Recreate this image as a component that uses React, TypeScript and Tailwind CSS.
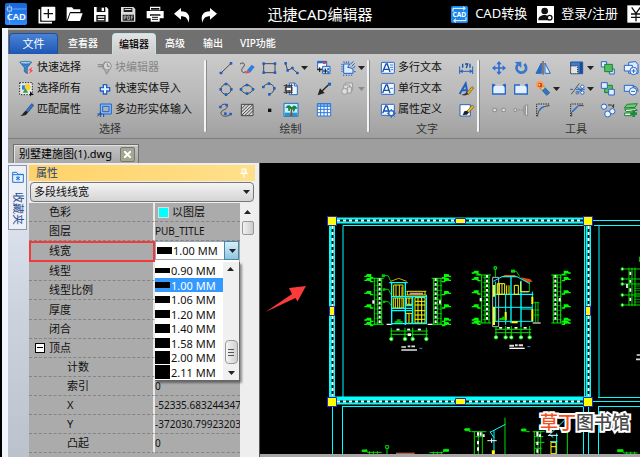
import React from "react";

type Kids = { children?: React.ReactNode };

const BLUE = "#1f5fc4";
const INK = "#4a4a4a";

/* 18px ribbon glyph, drawn on a 54-unit grid */
function Glyph({ children }: Kids) {
  return (
    <svg className="size-[18px] shrink-0" viewBox="0 0 54 54" fill="none" strokeWidth="3" aria-hidden="true">
      {children}
    </svg>
  );
}

function Dots({ at }: { at: number[][] }) {
  return (
    <>
      {at.map(([x, y]) => (
        <rect key={x + "-" + y} x={x - 4} y={y - 4} width="8" height="8" rx="2" fill={BLUE} />
      ))}
    </>
  );
}

function Sheet() {
  return <rect x="7" y="10" width="39" height="33" rx="2" fill="#f4f9ff" stroke="#2b67c8" />;
}

const icons: Record<string, React.ReactNode> = {
  filter: (
    <>
      <path d="M5 9h36L28 26v18l-9-6V26z" fill="#3b86c9" stroke="#1c5b9c" strokeWidth="2" />
      <ellipse cx="23" cy="11" rx="17" ry="4" fill="#9fd0f2" stroke="#1c5b9c" strokeWidth="2" />
      <path d="M46 20 29 35h8l-8 14 19-16h-8z" fill="#f0393c" stroke="#fff" strokeWidth="1" />
    </>
  ),
  selectAll: (
    <>
      <rect x="5" y="8" width="38" height="36" stroke="#222" strokeDasharray="4 4" fill="#e8e8e8" />
      <path d="M12 16h13v13H12z" fill="#2d7fd6" />
      <circle cx="29" cy="21" r="9" fill="#f7d32f" />
      <path d="M14 38 22 25l9 13z" fill="#31a24a" />
      <path d="M36 34v16l4-5h8z" fill="#111" />
    </>
  ),
  match: (
    <>
      <path d="M24 29 41 8l6 5-17 21z" fill="#3274c8" stroke="#173f7d" strokeWidth="2" />
      <path d="M24 29c-8 3-8 12-18 15 11 2 21-1 24-10z" fill="#222" />
    </>
  ),
  block: (
    <g stroke="#8f8f8f">
      <path d="M5 17h18M5 23h12l9-12v21l-7-8" strokeWidth="4" />
      <circle cx="34" cy="21" r="12" fill="#d5d5d5" />
      <path d="M34 14v9h7M27 36l5 10 8-13" fill="#aaa" />
    </g>
  ),
  plus: <path d="M22 14h10v9h9v10h-9v9H22v-9h-9V23h9z" fill="#e8f2ff" stroke="#2563c2" strokeWidth="4" />,
  polygon: (
    <>
      <path d="M13 9h33v30H13zM20 16h19v16H20z" fill="#8bbcf5" fillRule="evenodd" stroke="#1f63c6" />
      <path d="M4 39h14M13 48V32M4 46l8-8M23 39v9" stroke="#164b9f" />
    </>
  ),
  line: (
    <>
      <path d="M13 41 42 13" stroke={INK} />
      <Dots at={[[12, 42], [42, 13]]} />
    </>
  ),
  sketch: (
    <>
      <path d="M6 15c12-8 17 2 10 9s-6 14 0 17l8-3" stroke={INK} />
      <path d="m27 34 14-17 9 7-14 17z" fill="#2f7de0" />
      <path d="m27 34-5 10 14-3z" fill="#e34b43" />
    </>
  ),
  rect: (
    <>
      <path d="M11 14h34v27H11z" stroke={INK} />
      <Dots at={[[11, 14], [45, 14], [11, 41], [45, 41]]} />
    </>
  ),
  poly: (
    <>
      <path d="M11 14 17 34 30 28 46 42" stroke={INK} />
      <Dots at={[[11, 13], [17, 34], [31, 27], [46, 42]]} />
    </>
  ),
  insert: (
    <>
      <path d="M8 7h27v23H8z" fill="#fff" stroke="#2466c2" />
      <path d="M8 7h27v6H8z" fill="#2466c2" />
      <circle cx="28" cy="12" r="4" fill="#ee3535" />
      <path d="M23 22h22v22H23z" fill="#cfe4fb" stroke="#2466c2" />
      <path d="M6 32h15m-7-7v14m10-3h14m-7-7v14" stroke="#111" />
      <path d="M37 28h5v5h-5zM37 37h5v5h-5z" fill="#2466c2" />
    </>
  ),
  region: (
    <>
      <path d="M14 15h18l-6 10 10 2 6 4v12H14z" fill="#dcebff" stroke="#1f63c6" />
      <path
        d="M7 16h4M7 23h4M7 30h4M7 37h4M15 7v5M22 7v5M29 7v5M14 47v4M22 47v4M30 47v4M38 47v4M34 16l9-9M38 22l9-9M41 28l8-6M45 38h5"
        stroke="#1f63c6"
      />
    </>
  ),
  circle: (
    <>
      <circle cx="27" cy="28" r="15" stroke={INK} />
      <Dots at={[[27, 12], [11, 28], [43, 28], [27, 44]]} />
    </>
  ),
  ellipse: (
    <>
      <ellipse cx="27" cy="28" rx="17" ry="12" stroke={INK} />
      <Dots at={[[27, 15], [9, 28], [45, 28], [27, 41]]} />
    </>
  ),
  arc: (
    <>
      <path d="M10 20c10-13 29-11 32 4 1 9-5 16-14 18" stroke={INK} />
      <Dots at={[[10, 21], [27, 11], [43, 25], [28, 43]]} />
    </>
  ),
  copyDoc: (
    <>
      <path d="M22 9h16l8 8v27H22z" fill="#eef5ff" stroke="#2868c5" />
      <path d="M37 9v9h9" stroke="#2868c5" />
      <path d="M5 17h27M5 37h27M10 21h20v12H10zM13 12v30M28 12v30" stroke="#333" />
      <path d="M14 24h12v6H14z" fill="#fff" />
    </>
  ),
  leader: (
    <>
      <path d="M14 40 43 12" stroke="#222" strokeWidth="4" />
      <path d="m8 46 7-21 14 14z" fill="#222" />
      <path d="M39 8h9v9h-9z" fill={BLUE} />
    </>
  ),
  group: (
    <g stroke="#999" fill="#ddd">
      <path d="M19 9h22v22H19z" />
      <path d="M14 15h18v22H14z" />
      <circle cx="17" cy="34" r="9" />
      <path d="M25 21h12v18H25z" />
    </g>
  ),
  spline: (
    <>
      <path d="M10 17c8-12 24-8 20 2-4 9-20 8-18 18 2 11 18 11 29 3" stroke={INK} />
      <Dots at={[[10, 18], [29, 12], [25, 38], [41, 39]]} />
    </>
  ),
  hatch: (
    <>
      <path d="M10 10h35v34H10z" fill="#d7d7d7" stroke="#444" />
      <path d="m10 24 14-14M10 34l24-24M11 43 45 10M21 43l24-24M31 43l14-14" stroke="#444" />
    </>
  ),
  point: <path d="M24 23h10v10H24z" fill="#111" />,
  image: (
    <>
      <path d="M6 7h42v39H6z" fill="#c8efff" stroke="#1d72c9" />
      <path d="M8 35h38v10H8z" fill="#2a94cc" />
      <path d="m27 19-2 26h6l-1-26z" fill="#87502b" />
      <path d="M28 20c-5-9-13-6-16 0 7-2 8 0 9 10 1-5 3-7 7-8 5 2 6 5 7 9 4-7 3-10 9-9-2-8-10-9-14-2z" fill="#12853f" stroke="#12853f" />
    </>
  ),
  table: (
    <>
      <path d="M7 8h40v37H7z" fill="#fff" stroke="#2a78dc" />
      <path d="M8 8h38v8H8zM7 25h40M7 35h40M17 8v37M27 8v37M37 8v37" stroke="#2a78dc" fill="#8abaf5" />
    </>
  ),
  mtext: (
    <>
      <Sheet />
      <path d="m11 39 10-24h4l8 24M15 31h14" stroke="#174fa9" strokeWidth="4" />
      <path d="M33 18h9M33 25h9M35 32h7" stroke="#3f83dd" />
    </>
  ),
  text: (
    <>
      <Sheet />
      <path d="m11 39 10-24h4l8 24M15 31h14" stroke="#174fa9" strokeWidth="4" />
      <path d="M33 25h9" stroke="#3f83dd" />
    </>
  ),
  attdef: (
    <>
      <Sheet />
      <path d="m11 37 9-22h4l8 22M15 30h14" stroke="#174fa9" strokeWidth="4" />
      <circle cx="37" cy="37" r="8" fill="#fff" stroke="#2767c7" strokeWidth="4" />
      <path d="M37 24v7M37 43v8M24 37h7M43 37h8M28 28l5 5M41 41l6 6M46 28l-5 5M28 46l5-5" stroke="#2767c7" />
    </>
  ),
  dim: (
    <>
      <path d="M8 22v23M47 22v23M8 37h39" stroke="#2464c4" />
      <path d="m8 37 9-6v12zM47 37l-9-6v12z" fill="#2464c4" />
      <path d="M17 14v12M24 15h8l-4 12M39 14v12" stroke="#174fa9" strokeWidth="4" />
    </>
  ),
  textStyle: (
    <>
      <path d="m8 42 18-31 6 31M16 31h15" stroke="#2360be" strokeWidth="6" />
      <path d="M29 39 45 20l5 4-16 20z" fill="#e5ad25" stroke="#6b4b10" strokeWidth="2" />
      <path d="M14 45c8 3 15 1 20-3l-6-6c-5 8-9 5-14 9z" fill="#333" />
    </>
  ),
  edit: (
    <>
      <path d="M9 11h31v34H9z" fill="#fff" stroke="#2464c4" />
      <path d="M30 31 46 12l5 5-16 19z" fill="#e8bd2d" stroke="#6b4b10" strokeWidth="2" />
      <path d="m17 42 5-11 8-2 5 6-5 6z" fill="#222" />
    </>
  ),
  move: (
    <>
      <path d="M27 11v32M11 27h32" stroke="#2b6fd4" strokeWidth="5" />
      <path d="m27 6 8 10H19zM27 48l8-10H19zM6 27l10-8v16zM48 27l-10-8v16z" fill="#2b6fd4" />
    </>
  ),
  rotate: (
    <>
      <path d="M37 15c14 16-2 31-16 24-9-5-10-16-3-23" stroke="#3778cd" strokeWidth="8" />
      <path d="m8 9 20-1v19z" fill="#3778cd" />
    </>
  ),
  mirror: (
    <>
      <path d="M22 12v31H6zM33 12v31h16z" fill="#d8e8fb" stroke="#2b69c4" />
      <path d="M22 12v31H6z" fill="#2b69c4" />
      <path d="M27 6v41" stroke="#333" />
    </>
  ),
  scale: (
    <>
      <path d="M8 9h36v35H8z" fill="#3d7ecc" stroke="#204e94" />
      <path d="M8 21h21v23H8z" fill="#e5e5e5" stroke="#333" strokeDasharray="3 3" />
      <path d="M35 11h7v31h-7z" fill="#1e4a94" />
    </>
  ),
  front: (
    <>
      <path d="M7 8h16v16H7zM31 30h15v15H31z" fill="#e4efff" stroke="#2868c5" />
      <path d="M17 16h23v22H17z" fill="#53bd64" stroke="#188330" />
    </>
  ),
  shapes: (
    <>
      <path d="m20 10 21-2 7 9v26H20z" fill="#dceaff" stroke="#2868c5" />
      <path d="M7 19h24v17H7z" fill="#eef5ff" stroke="#2868c5" />
      <circle cx="35" cy="36" r="11" fill="#eff6ff" stroke="#2868c5" />
      <path d="M29 36h12M35 30v12" stroke="#2868c5" />
    </>
  ),
  stretch: (
    <>
      <path d="M8 15h38v27H8z" fill="#e4efff" stroke="#2868c5" strokeWidth="4" />
      <path d="M16 11h22v7H16z" fill="#c6c6c6" />
      <path d="m8 9 6 8-6 7zM46 9l-6 8 6 7z" fill="#2868c5" />
    </>
  ),
  lengthen: (
    <>
      <path d="M8 15h38v27H8z" fill="#e4efff" stroke="#2868c5" strokeWidth="4" />
      <path d="M24 11h14v7H24z" fill="#c6c6c6" />
      <path d="M46 9l-6 8 6 7z" fill="#2868c5" />
    </>
  ),
  explode: (
    <>
      <circle cx="18" cy="15" r="12" fill="#f5a35a" />
      <circle cx="18" cy="15" r="7" fill="#e33a25" />
      <circle cx="16" cy="14" r="3" fill="#ffe766" />
      <path d="m20 26 9-7 18 19-9 8z" fill="#2d79c5" stroke="#174b87" strokeWidth="2" />
      <path d="m20 26 9-7 4 4-9 8z" fill="#f2d05a" />
    </>
  ),
  trim: (
    <>
      <path d="M10 43 34 10" stroke="#555" />
      <path d="M6 28h9M24 28h26M28 22l20 16M29 39l18-18" stroke="#2868c5" />
      <circle cx="43" cy="20" r="5" fill="#fff" stroke="#2868c5" />
      <circle cx="43" cy="38" r="5" fill="#fff" stroke="#2868c5" />
      <circle cx="28" cy="38" r="4" stroke="#2868c5" />
    </>
  ),
  back: (
    <>
      <path d="M17 16h23v22H17z" fill="#53bd64" stroke="#188330" />
      <path d="M7 8h18v17H7zM29 28h17v17H29z" fill="#e4efff" stroke="#2868c5" />
    </>
  ),
  shapes2: (
    <>
      <path d="M7 16h27v18H7z" fill="#dceaff" stroke="#2868c5" />
      <path d="M32 18q16 0 16 17" stroke="#2868c5" />
      <circle cx="33" cy="34" r="11" fill="#eff6ff" stroke="#2868c5" />
      <path d="M27 34h12" stroke="#2868c5" />
    </>
  ),
  breakAt: (
    <>
      <path d="M9 22h10v10H9zM36 22h10v10H36z" fill="#e4e4e4" stroke="#8d8d8d" />
      <path d="M22 27h12" stroke="#999" strokeDasharray="2 3" />
    </>
  ),
  join: (
    <>
      <path d="M6 23h8v8H6zM40 12h7v32h-7z" fill="#e4e4e4" stroke="#8d8d8d" />
      <path d="M18 27h6m3 0h9M36 15v26" stroke="#8d8d8d" />
    </>
  ),
  fillet: (
    <>
      <path d="M8 46V9h39" stroke="#222" strokeDasharray="4 3" />
      <path d="M11 46C11 27 24 15 47 14" stroke="#444" />
      <path d="M16 28q5-8 13-11" stroke="#2a74d4" strokeWidth="5" />
    </>
  ),
  chamfer: (
    <>
      <path d="M8 46V9h39" stroke="#222" strokeDasharray="4 3" />
      <path d="M11 46V34L31 14h16" stroke="#444" />
      <path d="m13 32 17-17" stroke="#2a74d4" strokeWidth="5" />
    </>
  ),
  links: (
    <>
      <circle cx="15" cy="17" r="8" fill="#e9f3ff" stroke="#2868c5" />
      <circle cx="26" cy="39" r="9" fill="#e9f3ff" stroke="#2868c5" />
      <circle cx="40" cy="31" r="8" fill="#e9f3ff" stroke="#2868c5" />
      <path d="M27 12h11l6 9M44 9v9" stroke="#333" />
    </>
  ),
  layers: (
    <>
      <path d="m15 10 31-2-7 11-32 2z" fill="#72ca77" stroke="#16832f" />
      <path d="m8 25 31-2 7 5-33 4zM8 36h20v8H8z" fill="#e9f8ea" stroke="#16832f" />
      <path d="M35 28v20M25 38h20" stroke="#1a8c35" strokeWidth="8" />
    </>
  ),
};

function Caret({ light }: { light?: boolean }) {
  return (
    <svg className="h-1.5 w-2 shrink-0" viewBox="0 0 8 6" aria-hidden="true">
      <path d="M1 1h7L4.500 5z" fill={light ? "#8a8a8a" : "#222"} />
    </svg>
  );
}

function Tool({ icon, label, menu, off }: { icon: string; label: string; menu?: boolean; off?: boolean }) {
  return (
    <button type="button" aria-label={label} disabled={off} className="flex h-[21px] items-center justify-start">
      <Glyph>{icons[icon]}</Glyph>
      {menu && <Caret light={off} />}
    </button>
  );
}

function LabelTool({ icon, label, off }: { icon: string; label: string; off?: boolean }) {
  return (
    <button
      type="button"
      disabled={off}
      className="flex h-[21px] items-center gap-px whitespace-nowrap text-[#111] disabled:text-[#858585]"
    >
      <Glyph>{icons[icon]}</Glyph>
      {label}
    </button>
  );
}

function Group({ title, className, children }: Kids & { title: string; className: string }) {
  return (
    <section className={"flex shrink-0 flex-col pt-[3px] " + className}>
      {children}
      <h2 className="h-[18px] pl-2 text-center leading-[18px] text-[#333]">{title}</h2>
    </section>
  );
}

function Divider() {
  return <div className="my-1.5 w-0.5 shrink-0 rounded bg-[#f1f3f5] shadow-[1px_0_0_#8b8b8b]" />;
}

function Ribbon() {
  return (
    <div className="flex h-[85px] shrink-0 overflow-hidden border-b border-[#7d7d7d] bg-linear-to-b from-[#cbcbcb] via-[#b9b9b9] to-[#a0a0a0] text-[11px]">
      <Group title="选择" className="w-[196px]">
        <div className="grid grid-cols-[78px_1fr] pl-[10px]">
          <LabelTool icon="filter" label="快速选择" />
          <LabelTool icon="block" label="块编辑器" off />
          <LabelTool icon="selectAll" label="选择所有" />
          <LabelTool icon="plus" label="快速实体导入" />
          <LabelTool icon="match" label="匹配属性" />
          <LabelTool icon="polygon" label="多边形实体输入" />
        </div>
      </Group>
      <Divider />
      <Group title="绘制" className="w-[161px]">
        <div className="grid grid-cols-[21px_22px_22px_33px_24px_28px] pl-[11px]">
          <Tool icon="line" label="直线" />
          <Tool icon="sketch" label="徒手画" />
          <Tool icon="rect" label="矩形" />
          <Tool icon="poly" label="多段线" menu />
          <Tool icon="insert" label="插入块" />
          <Tool icon="region" label="面域" menu />
          <Tool icon="circle" label="圆" />
          <Tool icon="ellipse" label="椭圆" />
          <Tool icon="arc" label="圆弧" />
          <Tool icon="copyDoc" label="外部参照" />
          <Tool icon="leader" label="引线" />
          <Tool icon="group" label="编组" menu off />
          <Tool icon="spline" label="样条曲线" />
          <Tool icon="hatch" label="填充" />
          <Tool icon="point" label="点" />
          <Tool icon="image" label="图像" />
          <Tool icon="table" label="表格" />
        </div>
      </Group>
      <Divider />
      <Group title="文字" className="w-[108px]">
        <div className="grid grid-cols-[78px_1fr] pl-[10px]">
          <LabelTool icon="mtext" label="多行文本" />
          <Tool icon="dim" label="标注" />
          <LabelTool icon="text" label="单行文本" />
          <Tool icon="textStyle" label="文字样式" />
          <LabelTool icon="attdef" label="属性定义" />
          <Tool icon="edit" label="编辑文字" />
        </div>
      </Group>
      <Divider />
      <Group title="工具" className="w-[186px]">
        <div className="grid grid-cols-[22px_22px_34px_31px_23px_24px] pl-[11px]">
          <Tool icon="move" label="移动" />
          <Tool icon="rotate" label="旋转" />
          <Tool icon="mirror" label="镜像" />
          <Tool icon="scale" label="缩放" menu />
          <Tool icon="front" label="前置" />
          <Tool icon="shapes" label="并集" />
          <Tool icon="stretch" label="拉伸" />
          <Tool icon="lengthen" label="拉长" />
          <Tool icon="explode" label="分解" menu />
          <Tool icon="trim" label="修剪" menu />
          <Tool icon="back" label="后置" />
          <Tool icon="shapes2" label="差集" />
          <Tool icon="breakAt" label="打断" off />
          <Tool icon="join" label="合并" off />
          <Tool icon="fillet" label="圆角" />
          <Tool icon="chamfer" label="倒角" />
          <Tool icon="links" label="复制" />
          <Tool icon="layers" label="图层" />
        </div>
      </Group>
    </div>
  );
}

/* 20px title bar glyph, drawn on a 60-unit grid */
function BarIcon({ label, children }: Kids & { label: string }) {
  return (
    <button type="button" aria-label={label} className="shrink-0">
      <svg className="size-5" viewBox="0 0 60 60" fill="none" aria-hidden="true">
        {children}
      </svg>
    </button>
  );
}

function TitleBar() {
  return (
    <header className="grid h-7 shrink-0 grid-cols-[1fr_auto_1fr] items-center overflow-hidden bg-black text-[13px] text-white">
      <div className="flex items-center gap-[7px] pl-[5px]">
        <svg className="mr-[3px] h-[22px] w-[22px] shrink-0" viewBox="0 0 66 66" role="img" aria-label="CAD">
          <defs>
            <linearGradient id="logo" x1="0" y1="0" x2="0" y2="1">
              <stop offset="0" stopColor="#1666d8" />
              <stop offset="1" stopColor="#2f8bff" />
            </linearGradient>
          </defs>
          <rect width="66" height="66" rx="5" fill="url(#logo)" />
          <path d="M2 18h62M14 4v58" stroke="#8fc3ff" strokeWidth="2" />
          <rect x="8" y="12" width="12" height="12" fill="#2b7fe8" stroke="#d5e9ff" strokeWidth="2" />
          <text x="34" y="51" textAnchor="middle" fontSize="28" fontWeight="600" fill="#fff" fontFamily="Noto Sans, sans-serif">
            CAD
          </text>
        </svg>
        <BarIcon label="新建">
          <path d="M7 16v40h38" stroke="#fff" strokeWidth="5" />
          <rect x="13" y="8" width="42" height="42" rx="3" fill="#fff" />
          <path d="M34 15v28M20 29h28" stroke="#111" strokeWidth="4" />
        </BarIcon>
        <BarIcon label="打开">
          <path d="M8 50V10h16l5 6h20v8H18z" fill="#fff" />
          <path d="M19 28h37l-8 23H11z" fill="#fff" />
        </BarIcon>
        <BarIcon label="保存">
          <path d="M9 9h37l6 6v38H9z" fill="#fff" />
          <path d="M17 9h26v15H17zM16 33h28v20H16z" fill="#111" />
          <path d="M32 11h7v10h-7zM20 37h20v4H20zM20 45h20v4H20z" fill="#fff" />
        </BarIcon>
        <BarIcon label="保存为PDF">
          <path d="M9 9h37l6 6v38H9z" fill="#ddd" />
          <path d="M17 12h26v12H17zM14 32h34v18H14z" fill="#222" />
          <path d="M20 15h20v3H20z" fill="#ddd" />
          <path d="M18 47V36h6v6h-6M29 36v11h5V36zM40 47V36h6m-6 5h5" stroke="#ddd" strokeWidth="2" />
        </BarIcon>
        <BarIcon label="打印">
          <path d="M15 8h31v11H15zM5 21h51v22H5z" fill="#fff" />
          <path d="M18 12h25v5H18zM15 31h31v5H15z" fill="#111" />
          <path d="M17 35h27v18H17z" fill="#fff" />
          <path d="M21 40h18M21 46h18" stroke="#111" strokeWidth="3" />
        </BarIcon>
        <BarIcon label="撤销">
          <path d="M6 29 27 12v10c21 0 30 14 22 34-2-13-8-19-22-19v10z" fill="#fff" />
        </BarIcon>
        <BarIcon label="重做">
          <path d="M54 29 33 12v10C12 22 3 36 11 56c2-13 8-19 22-19v10z" fill="#fff" />
        </BarIcon>
      </div>
      <h1 className="text-[15px]">迅捷CAD编辑器</h1>
      <div className="-mr-1.5 flex items-center justify-end gap-2 whitespace-nowrap">
        <button type="button" className="flex items-center gap-[7px]">
          <svg className="size-[17px]" viewBox="0 0 51 51" aria-hidden="true">
            <rect width="51" height="51" rx="5" fill="#1b87e8" />
            <path d="M6 17V7h35M36 2l7 5-7 6M45 34v10H10M15 38l-7 6 7 5" fill="none" stroke="#fff" strokeWidth="3" />
            <text x="25" y="34" textAnchor="middle" fontSize="20" fontWeight="700" fill="#fff" fontFamily="Noto Sans, sans-serif">
              CAD
            </text>
          </svg>
          CAD转换
        </button>
        <button type="button" className="ml-0.5 flex items-center gap-[7px]">
          <svg className="size-[17px]" viewBox="0 0 51 51" aria-hidden="true">
            <rect width="51" height="51" fill="#fff" />
            <circle cx="23" cy="15" r="10" fill="#111" />
            <path d="M4 43c0-12 6-12 14-16h10l8 16z" fill="#111" />
            <circle cx="38" cy="35" r="7" fill="#fff" stroke="#111" strokeWidth="4" />
          </svg>
          登录/注册
        </button>
        <BarIcon label="充值">
          <rect x="4" y="4" width="52" height="52" fill="#fff" />
          <path d="m17 10 13 18 13-18M30 28v24M15 30h30M15 40h30" stroke="#111" strokeWidth="4" />
        </BarIcon>
      </div>
    </header>
  );
}

function Tabs() {
  return (
    <nav className="flex h-[26px] shrink-0 items-end border-t-2 border-[#bdbdbd] bg-[#707070] pl-px text-[10px] font-medium text-white">
      <button
        type="button"
        className="mr-2.5 h-[21px] w-[49px] rounded-t-sm border border-b-0 border-[#1d4fa5] bg-linear-to-b from-[#4a83d4] to-[#1c57b5] text-[11px] font-normal"
      >
        文件
      </button>
      <button type="button" className="mr-3.5 h-[21px]">查看器</button>
      <button
        type="button"
        className="mr-[9px] h-[21px] w-11 rounded-t-sm border border-b-0 border-[#bfe3e8] bg-linear-to-b from-[#e3e3e3] to-[#cbcbcb] text-black"
      >
        编辑器
      </button>
      <button type="button" className="mr-[18px] h-[21px]">高级</button>
      <button type="button" className="mr-[17px] h-[21px]">输出</button>
      <button type="button" className="h-[21px]">VIP功能</button>
    </nav>
  );
}

const widths = [
  ["0.90 MM", "h-[5px]"],
  ["1.00 MM", "h-1.5"],
  ["1.06 MM", "h-[7px]"],
  ["1.20 MM", "h-2"],
  ["1.40 MM", "h-[9px]"],
  ["1.58 MM", "h-2.5"],
  ["2.00 MM", "h-[13px]"],
  ["2.11 MM", "h-3.5"],
];

function WidthPicker() {
  return (
    <div className="relative z-10 h-full w-[84px] bg-white">
      <span className="absolute top-1.5 left-0.5 h-[7px] w-[15px] bg-black" />
      <select
        aria-label="线宽"
        defaultValue="1.00 MM"
        className="h-[19px] w-full appearance-none border border-[#9aa7b5] bg-transparent pl-[17px] text-[11px] leading-4"
      >
        {widths.map(([w]) => (
          <option key={w}>{w}</option>
        ))}
      </select>
      <span className="pointer-events-none absolute top-0 right-0 flex h-[19px] w-[15px] items-center justify-center border border-[#4887a8] bg-linear-to-b from-[#d8effa] to-[#8fc5e0]">
        <Caret />
      </span>
      <div className="absolute top-full left-0 flex w-[85px] border-r border-b border-[#666] bg-white shadow-[2px_2px_2px_#0006]">
        <ul role="listbox" aria-label="线宽列表" className="flex-1 py-px text-[11px]">
          {widths.map(([w, bar], i) => (
            <li
              key={w}
              role="option"
              aria-selected={i === 1}
              className="flex h-[15px] items-center gap-px leading-[15px] even:h-3.5 aria-selected:bg-[#3399ff] aria-selected:text-white"
            >
              <span className={"w-[15px] shrink-0 bg-black " + bar} />
              <span className="whitespace-nowrap">{w}</span>
            </li>
          ))}
        </ul>
        <div className="flex w-4 flex-col items-center justify-between bg-[#f0f0f0] py-1">
          <span className="rotate-180"><Caret /></span>
          <span className="mt-[62px] flex h-6 w-[13px] flex-col items-center justify-center gap-0.5 rounded-sm border border-[#999] bg-linear-to-r from-[#f5f5f5] to-[#cfcfcf]">
            <i className="h-px w-1.5 bg-[#555]" />
            <i className="h-px w-1.5 bg-[#555]" />
            <i className="h-px w-1.5 bg-[#555]" />
          </span>
          <Caret />
        </div>
      </div>
    </div>
  );
}

const rows: { name: string; value?: React.ReactNode; level?: number }[] = [
  {
    name: "色彩",
    value: (
      <span className="flex items-center gap-1 pl-1 text-[11px]">
        <i className="size-[9px] bg-[#00ffff] ring-1 ring-[#ddd]" />
        以图层
      </span>
    ),
  },
  { name: "图层", value: "PUB_TITLE" },
  { name: "线宽", value: <WidthPicker /> },
  { name: "线型" },
  { name: "线型比例" },
  { name: "厚度" },
  { name: "闭合" },
  { name: "顶点", level: 0 },
  { name: "计数", level: 2 },
  { name: "索引", value: "0", level: 2 },
  { name: "X", value: "-52335.683244347", level: 2 },
  { name: "Y", value: "-372030.79923203", level: 2 },
  { name: "凸起", value: "0", level: 2 },
];

function Properties() {
  return (
    <aside className="flex w-[231px] shrink-0 flex-col border-r border-[#555] bg-[#eeeeee] pt-0.5 pr-1 text-[11px] text-[#111]">
      <header className="flex h-4 shrink-0 items-center justify-between bg-linear-to-r from-[#ffd268] to-[#ffe08a] pr-1.5 pl-[7px] text-[#1c3f7a]">
        <h2>属性</h2>
        <button type="button" aria-label="固定">
          <svg className="size-2.5" viewBox="0 0 10 10" stroke="#fff" fill="none" aria-hidden="true">
            <path d="M3 1h4v4H3zM6 1v4M1 5.500h8M5 6v4" />
          </svg>
        </button>
      </header>
      <div className="relative mx-px my-px h-5 shrink-0">
        <select
          aria-label="对象"
          className="h-full w-full appearance-none rounded-sm border border-[#777] bg-linear-to-b from-[#f4f4f4] to-[#d4d4d4] pl-[3px]"
        >
          <option>多段线线宽</option>
        </select>
        <span className="pointer-events-none absolute top-0 right-1 flex h-full items-center">
          <Caret />
        </span>
      </div>
      <div className="flex min-h-0 flex-1">
        <div className="w-[211px] bg-[#ababab]">
          <table className="h-[250px] w-full table-fixed border-separate border-spacing-0">
            <colgroup>
              <col className="w-[126px]" />
              <col />
            </colgroup>
            <tbody>
              {rows.map(({ name, value, level = 1 }, i) => (
                <tr key={name}>
                  <th
                    scope="row"
                    className={
                      "border-r-2 border-b border-r-[#e8e8e8] p-0 text-left font-normal " +
                      (i === 2 ? "border-b-transparent outline-2 -outline-offset-2 outline-[#f23a3a] " : "border-b-[#858585] [border-bottom-style:dashed] ") +
                      (level === 2 ? "pl-[38px]" : level === 1 ? "pl-5" : "pl-1.5")
                    }
                  >
                    <span className="flex items-center gap-1 leading-4">
                      {level === 0 && (
                        <button
                          type="button"
                          aria-label="折叠"
                          className="flex size-2.5 items-center justify-center border border-black bg-white"
                        >
                          <i className="h-px w-1.5 bg-black" />
                        </button>
                      )}
                      {name}
                    </span>
                  </th>
                  <td
                    className={
                      "p-0 text-[10px] leading-4 whitespace-nowrap " +
                      (i === 2 ? "" : "overflow-hidden border-b border-dashed border-[#858585]")
                    }
                  >
                    {value}
                  </td>
                </tr>
              ))}
            </tbody>
          </table>
        </div>
        <div className="flex flex-1 flex-col items-center gap-1.5 pt-1.5">
          <span className="rotate-180"><Caret /></span>
          <span className="h-3.5 w-3 rounded-xs border border-[#999] bg-linear-to-r from-[#f2f2f2] to-[#cccccc]" />
        </div>
      </div>
    </aside>
  );
}

/* Level marks with their dimension lines; dir is the side the marks point to */
function Levels({ x, dir, ys }: { x: number; dir: 1 | -1; ys: number[] }) {
  const top = ys[0];
  const bottom = ys[ys.length - 1];
  const ticks: number[] = [];
  for (let y = top + 14; y < bottom; y += 14) ticks.push(y);
  return (
    <g>
      <g stroke="#00f000" strokeWidth="3">
        <path d={`M${x} ${top + 6}V${bottom}M${x - dir * 10} ${top + 6}V${bottom}M${x - dir * 22} ${top + 6}V${bottom}`} />
        <path d={`M${x + dir * 18} ${top + 6}H${x - dir * 28}M${x + dir * 18} ${bottom}H${x - dir * 28}`} />
        {ticks.map((y) => (
          <path key={y} d={`M${x + 3} ${y}H${x - dir * 24}`} strokeWidth="2" />
        ))}
      </g>
      {ys.map((y) => (
        <path key={y} d={`M${x + dir * 30} ${y}h${-dir * 6}l${-dir * 3}-5h${-dir * 10}v9h${-dir * 8}`} fill="#00ff00" stroke="#00ff00" strokeWidth="4" />
      ))}
      {ticks.map((y) => (
        <rect key={y} x={x - dir * 16 - 3} y={y - 8} width="6" height="8" fill="#fff" />
      ))}
      <rect x={x - 6} y={(top + bottom) / 2} width="6" height="10" fill="#fff" />
    </g>
  );
}

/* Axis bubbles and dimension chain under an elevation */
function Axes({ xs, y }: { xs: number[]; y: number }) {
  const a = xs[0];
  const b = xs[xs.length - 1];
  return (
    <g>
      <path d={`M${a - 3} ${y}H${b + 5}M${a - 3} ${y + 10}H${b + 5}`} stroke="#00e000" strokeWidth="3" />
      {xs.map((x, i) => (
        <g key={x}>
          <path d={`M${x} ${y - 10}v28`} stroke="#00e000" strokeWidth="3" />
          <circle cx={x} cy={y + 24} r="5" fill="#d8ffd8" stroke="#00ff00" strokeWidth="3" />
          {i > 0 && <rect x={(x + xs[i - 1]) / 2 - 5} y={y - 7} width="9" height="5" fill="#fff" />}
        </g>
      ))}
    </g>
  );
}

function FrontElevation() {
  return (
    <g transform="translate(360 265) scale(.33333)" fill="none" strokeWidth="3">
      <Levels x={43} dir={-1} ys={[34, 46, 85, 125, 165, 178]} />
      <Levels x={243} dir={1} ys={[34, 46, 85, 125, 165, 178]} />
      <path d="M70 32h14l9 18M73 73h12l8 15M73 110h12l8 10" stroke="#00c800" />
      <path d="M65 28h10v9H65zM68 70h8v7h-8zM68 107h8v7h-8z" fill="#00c800" />
      <path d="M101 60h28v34h-28zM108 60v34M118 60v34M126 65v29M100 99h31v30h-31zM106 99v30M113 99v30M119 99v30M126 99v30M139 79h60M139 90h60M142 79v11M195 79v11" stroke="#e8e800" />
      <path d="M139 99h17v19h-17zM147 99v19M138 145h18v30h-18zM147 145v30M165 98h30v76h-30zM174 98v76M185 98v76M165 109h30M165 120h30M165 137h30M165 150h30M165 163h30" stroke="#ffff00" />
      <path d="M149 86h40" stroke="#d99" strokeWidth="6" />
      <path d="m92 49 24-9 24 9" stroke="#c8b000" />
      <path d="M88 53h55M95 55v125M136 52v128M158 96v80M199 90v88M94 95h107M94 130h64M94 137h64M136 122h22M94 176h106" stroke="#00ffff" strokeWidth="4" />
      <path d="M104 174v-6h6v-5h12v5h6v6z" fill="#00b800" />
      <path d="M80 178h13M203 178h14" stroke="#fff" strokeWidth="4" />
      <Axes xs={[94, 135, 158, 199]} y={198} />
      <path d="M143 205h10v8h-10z" fill="#fff" />
      <path d="M124 246h14m5-2h8m3 0h11" stroke="#ddd" strokeWidth="5" />
      <path d="M124 255h47" stroke="#fff" strokeWidth="4" />
      <path d="M178 250h9" stroke="#39c" />
    </g>
  );
}

function SideElevation() {
  return (
    <g transform="translate(470 260) scale(.33333)" fill="none" strokeWidth="3">
      <Levels x={35} dir={-1} ys={[39, 58, 98, 140, 180, 189]} />
      <Levels x={272} dir={1} ys={[39, 58, 98, 140, 180, 189]} />
      <path d="M76 26v26M127 34h12l10 16M178 66v30M197 125v62M204 125v62M192 128h16M192 150h16M192 165h16" stroke="#00c800" />
      <circle cx="76" cy="24" r="4" stroke="#00e000" strokeWidth="4" />
      <path d="M123 29h12v9h-12z" fill="#00e000" />
      <path d="M68 52h18v148H68z" stroke="#bbb" />
      <path d="m92 52 12-7h30l8 7z" fill="#e06a00" />
      <path d="m150 52 30 5 8 8-20 2z" fill="#e04a10" />
      <path d="m70 64 26-14h45l9 5 30 16M107 104v90M77 65v120M75 142h112M153 147h36M75 184h115M187 95v90" stroke="#00ffff" />
      <path d="M123 50v140M153 62v138M75 103h115" stroke="#00ffff" strokeWidth="4" />
      <path d="M82 71h22v32H82zM88 71v32M96 71v32M110 76v27M117 76v27M133 76h12v27h-12zM152 65v30h26" stroke="#ffff00" />
      <path d="M72 75v35M72 140v55M107 156v25M187 110v22M187 148v35M125 187h18" stroke="#ffff00" strokeWidth="6" />
      <path d="M157 96h20" stroke="#ccc" strokeDasharray="3 2" />
      <path d="M88 180v-6h8v-4h10v10z" fill="#00c800" />
      <path d="M188 189h24" stroke="#ccc" strokeWidth="4" />
      <Axes xs={[78, 107, 124, 153, 179]} y={208} />
      <path d="M118 257h14m3-1h8m3 0h13" stroke="#ddd" strokeWidth="6" />
      <path d="M118 265h46" stroke="#fff" strokeWidth="4" />
      <path d="M172 260h9" stroke="#39c" />
    </g>
  );
}

function PartialDrawings() {
  return (
    <>
      <g transform="translate(450 200) scale(.33333)" fill="none" stroke="#00e000" strokeWidth="3">
        <path d="M517 207h55M517 237h55M517 252h55M517 285h55M517 315h55M537 203v115M546 203v115M555 203v115M569 170v16" />
        <path d="M553 258h17M553 265h17M553 272h17M553 280h17M553 290h17M553 298h17M553 306h17" strokeWidth="2" />
        {[207, 237, 252, 285, 315].map((y) => (
          <circle key={y} cx="517" cy={y} r="4" fill="#dfd" />
        ))}
        <path d="M541 215v10M541 240v8M541 265v10M541 293v10M531 252v12" stroke="#fff" strokeWidth="5" />
        <path d="M560 465h10M558 478h12" stroke="#ddd" strokeWidth="5" />
      </g>
      <g transform="translate(320 355) scale(.33333)" fill="none" stroke="#00e000" strokeWidth="3">
        <path d="M125 288h10l4-5 3 9h43M328 293h40l4-6h14M197 272h9v8h-9zM201 280v18M148 289v8M160 289v8M172 289v8M340 290v8M352 290v8M364 290v8" />
        <path d="M432 224h12l3 5h8M602 225h12l5 5h10M463 228v70M475 232v66M487 232v66M643 228v70M654 232v66M662 228v70M456 230h43M638 230h36M466 245h20M645 245h25M645 262h28M645 280h20" />
        <path d="M127 285h13v5h-13zM371 283h15v6h-15zM435 221h14v6h-14zM605 222h13v6h-13zM893 284h16v6h-16z" fill="#00ff00" />
        <path d="M555 188v110M742 200v98M893 288h14l4 6h42M920 290v8M932 290v8M944 290v8" />
        <path d="m510 232 46-24M522 225v65M510 230l12 18M688 240l46-45M710 235v62M688 238l12 10M690 260h22" stroke="#00ffff" />
        <path d="M228 296h56" stroke="#a64" strokeWidth="6" />
        <path d="M520 286v12" stroke="#ffff00" strokeWidth="9" />
        <path d="M693 262h15v34h-15zM693 275h15" stroke="#ffff00" />
        <path d="M474 232v10M482 232v10M491 238v8M474 258v10M474 277v10M652 230v14M652 260v10M652 283v10M660 238v8" stroke="#fff" strokeWidth="6" />
        <path d="M502 257h28M515 250v14M684 241h30" stroke="#fff" />
      </g>
    </>
  );
}

function Canvas() {
  return (
    <main className="relative min-w-0 flex-1 overflow-hidden border-b-3 border-[#aaa5a5] bg-black">
      <svg
        className="h-full w-full"
        viewBox="260 163 380 291"
        preserveAspectRatio="xMinYMin slice"
        role="img"
        aria-label="别墅建施图"
      >
        <g fill="none" stroke="#00ffff">
          <path d="M588 220.500h52M594 225.500h46M599 225v173M598 397.500h42M590 401.500h50M598 406.500h42M598.500 406v50M588.500 402v54M583.500 406v50M332.500 402v54M342.500 406v50M342 406.500h242" />
          <path d="M343 397V225.500h241" />
          <path d="M332 220.500h256M332 221v180" strokeWidth="6" />
          <path d="M332 400.500h256" strokeWidth="8" />
          <path d="M587.500 221v180" strokeWidth="7" />
        </g>
        <path d="M585.500 226v170" stroke="#004d4d" />
        <g fill="none" strokeWidth="2">
          <path d="M337 220.500h246M332.500 226v170M588.500 226v170M337 401.500h246" stroke="#111" />
          <path d="M337 220.500h246M332.500 226v170M588.500 226v170M337 401.500h246" stroke="#fff" strokeDasharray="3 3" />
        </g>
        <g fill="#ffff00" stroke="#2525c8">
          <path d="M327.500 216.500h9v9h-9zM583.500 216.500h9v9h-9zM327.500 397.500h9v9h-9zM583.500 397.500h9v9h-9z" />
          <path d="M455.500 218.500h10v5h-10zM455.500 398.500h10v6h-10zM329.500 306.500h5v9h-5zM585.500 306.500h5v9h-5z" />
        </g>
        <FrontElevation />
        <SideElevation />
        <PartialDrawings />
        <path d="m265.500 312 26.500-18-3-6 17-2-8.500 15.500-2-3.500z" fill="#fb3a3a" />
      </svg>
      <p className="absolute right-2.5 bottom-5 text-[18px] leading-6 font-medium text-[#4a4a4a] [-webkit-text-stroke:4px_#fff] [paint-order:stroke_fill]">
        <span className="text-[#f4511e]">草丁</span>图书馆
      </p>
    </main>
  );
}

export default function App() {
  return (
    <div className="flex h-screen flex-col overflow-hidden bg-black font-['Noto_Sans','Noto_Sans_CJK_SC',sans-serif]">
      <TitleBar />
      <div className="ml-0.5 flex min-h-0 flex-1 flex-col border-l-6 border-[#f1f5fd]">
        <Tabs />
        <Ribbon />
        <div className="flex h-6 shrink-0 items-end bg-[#9e9e9e] pl-[5px]">
          <div className="flex h-[19px] items-center gap-2 border border-b-0 border-[#6f6f6f] bg-linear-to-b from-[#c4c4c4] to-[#a8a8a8] pr-[3px] pl-[5px] text-[11px] shadow-[inset_1px_1px_0_#e2e2e2]">
            别墅建施图(1).dwg
            <button
              type="button"
              aria-label="关闭"
              className="flex size-[15px] items-center justify-center rounded-xs border border-[#77776a] bg-[#a5a594]"
            >
              <svg className="size-[7px]" viewBox="0 0 7 7" stroke="#fff" strokeWidth="2" aria-hidden="true">
                <path d="m0 0 7 7M7 0 0 7" />
              </svg>
            </button>
          </div>
        </div>
        <div className="flex min-h-0 flex-1">
          <div className="w-[21px] shrink-0 bg-linear-to-b from-[#e6ecf5] via-[#ccd3df] to-[#bcc2cc] pt-0.5">
            <button
              type="button"
              className="flex h-[65px] w-[19px] flex-col items-center gap-2 border border-[#8d96a3] bg-[#edf0f6] pt-1 text-[11px] text-[#2a4f8f]"
            >
              <svg className="size-3.5 shrink-0" viewBox="0 0 42 42" fill="none" stroke="#2474d8" strokeWidth="3" aria-hidden="true">
                <path d="M5 37V7h12l4 6h16v24z" fill="#e7f2ff" />
                <path d="M5 14h32M21 18v14M15 21l12 8M27 21l-12 8" />
              </svg>
              <span className="leading-3 [text-orientation:sideways] [writing-mode:vertical-rl]">收藏夹</span>
            </button>
          </div>
          <Properties />
          <Canvas />
        </div>
      </div>
    </div>
  );
}
